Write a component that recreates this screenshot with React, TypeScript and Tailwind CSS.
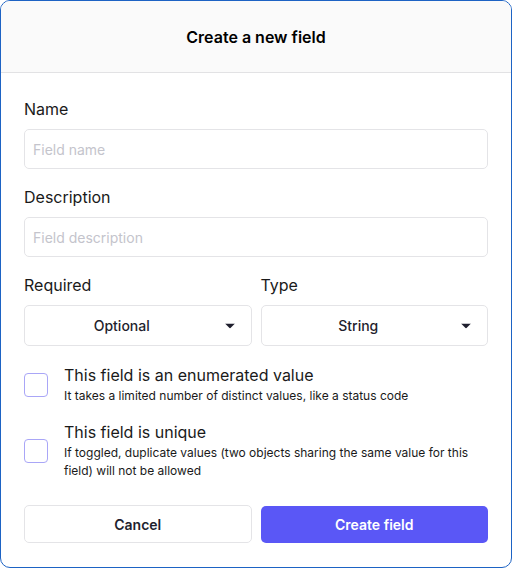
import React, { useState } from 'react';

function Caret() {
    return (
        <svg width="10" height="5" viewBox="0 0 10 5" className="absolute right-[16px] top-1/2 -translate-y-1/2">
            <path d="M0 0h10L5 5z" fill="#1f1f2e" />
        </svg>
    );
}

export default function App() {
    const [enumerated, setEnumerated] = useState(false);
    const [unique, setUnique] = useState(false);

    return (
        <main className="w-[512px] h-[568px] bg-white font-['Inter',sans-serif] text-[#1a1a1a]">
            <div className="h-full flex flex-col border border-[#1d63c4] rounded-[10px] overflow-hidden">
                {/* HEADER */}
                <header className="h-[72px] shrink-0 flex items-center justify-center bg-[#fafafa] border-b border-[#e2e2e4]">
                    <h1 className="text-[16px] font-semibold text-black">Create a new field</h1>
                </header>

                <form className="flex flex-col px-[23px] pt-[24px]" onSubmit={e => e.preventDefault()}>
                    <label className="text-[16px] leading-[24px] mb-[8px]">Name</label>
                    <input type="text" placeholder="Field name" className="h-[40px] px-[8px] text-[14px] border border-[#e4e4e7] rounded-[5px] placeholder:text-[#c4c4cc] outline-none" />

                    <label className="text-[16px] leading-[24px] mt-[16px] mb-[8px]">Description</label>
                    <input type="text" placeholder="Field description" className="h-[40px] px-[8px] text-[14px] border border-[#e4e4e7] rounded-[5px] placeholder:text-[#c4c4cc] outline-none" />

                    <div className="grid grid-cols-2 gap-[9px] mt-[16px]">
                        <div className="flex flex-col">
                            <label className="text-[16px] leading-[24px] mb-[8px]">Required</label>
                            <button type="button" className="relative h-[41px] pr-[32px] border border-[#e4e4e7] rounded-[5px] text-[14px] font-medium text-[#1f1f2e]">
                                Optional
                                <Caret />
                            </button>
                        </div>
                        <div className="flex flex-col">
                            <label className="text-[16px] leading-[24px] mb-[8px]">Type</label>
                            <button type="button" className="relative h-[41px] pr-[32px] border border-[#e4e4e7] rounded-[5px] text-[14px] font-medium text-[#1f1f2e]">
                                String
                                <Caret />
                            </button>
                        </div>
                    </div>

                    {/* CHECKBOXES */}
                    <div className="flex items-center gap-[16px] mt-[19px]">
                        <button type="button" onClick={() => setEnumerated(!enumerated)} className={`w-[24px] h-[24px] shrink-0 border border-[#a9a6f7] rounded-[4px] ${enumerated ? 'bg-[#5b57f5]' : 'bg-white'}`} />
                        <div className="flex flex-col">
                            <span className="text-[16px] leading-[20px]">This field is an enumerated value</span>
                            <span className="text-[12px] leading-[18px] mt-[2px]">It takes a limited number of distinct values, like a status code</span>
                        </div>
                    </div>

                    <div className="flex items-center gap-[16px] mt-[17px]">
                        <button type="button" onClick={() => setUnique(!unique)} className={`w-[24px] h-[24px] shrink-0 border border-[#a9a6f7] rounded-[4px] ${unique ? 'bg-[#5b57f5]' : 'bg-white'}`} />
                        <div className="flex flex-col">
                            <span className="text-[16px] leading-[20px]">This field is unique</span>
                            <span className="text-[12px] leading-[18px] mt-[2px]">If toggled, duplicate values (two objects sharing the same value for this field) will not be allowed</span>
                        </div>
                    </div>

                    <div className="grid grid-cols-2 items-center gap-[9px] mt-[25px]">
                        <button type="button" className="h-[38px] border border-[#e4e4e7] rounded-[5px] text-[14px] font-semibold text-[#1f1f2e]">Cancel</button>
                        <button type="submit" className="h-[37px] mt-[1px] rounded-[5px] bg-[#5a57f6] text-[14px] font-semibold text-white">Create field</button>
                    </div>
                </form>
            </div>
        </main>
    );
}
